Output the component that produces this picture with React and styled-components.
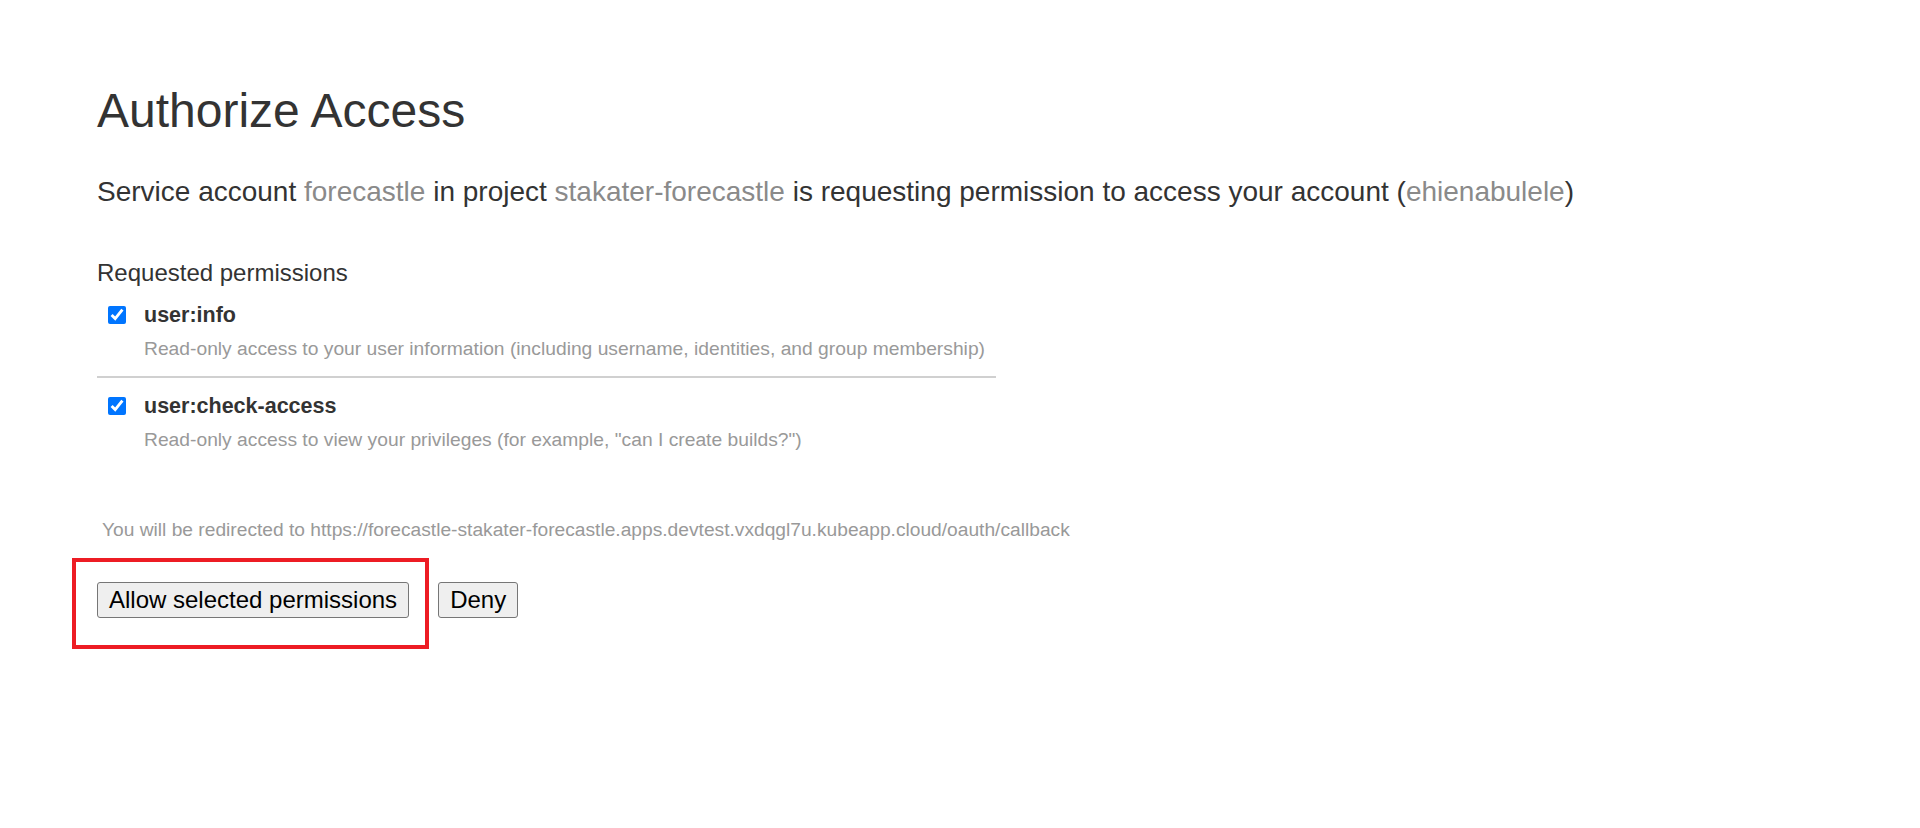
import React from 'react';
import styled, { createGlobalStyle } from 'styled-components';

const GlobalStyle = createGlobalStyle`
  html, body {
    margin: 0;
    padding: 0;
    background: #fff;
  }
  body {
    font-family: "Liberation Sans", Arial, Helvetica, sans-serif;
    color: #333;
  }
`;

const Page = styled.div`
  padding: 83px 0 0 97px;
  min-height: 828px;
  box-sizing: border-box;
`;

const Title = styled.h1`
  margin: 0;
  font-size: 48px;
  line-height: 56px;
  font-weight: 400;
  color: #333;
`;

const Lead = styled.p`
  margin: 37px 0 0;
  font-size: 28px;
  line-height: 32px;
  color: #333;
`;

const Muted = styled.span`
  color: #8a8a8a;
`;

const SectionLabel = styled.div`
  margin-top: 51px;
  font-size: 24px;
  line-height: 28px;
  color: #333;
`;

const PermissionList = styled.div`
  width: 899px;
  margin-top: 16px;
`;

const Permission = styled.label`
  display: grid;
  grid-template-columns: 18px 1fr;
  column-gap: 18px;
  padding: 0 0 ${(p) => (p.$last ? '0' : '16px')} 11px;
  border-bottom: ${(p) => (p.$last ? 'none' : '2px solid #d0d0d0')};
  margin-bottom: ${(p) => (p.$last ? '0' : '16px')};
`;

const Check = styled.input`
  width: 18px;
  height: 18px;
  margin: 3px 0 0;
  accent-color: #0075ff;
`;

const PermName = styled.div`
  font-size: 21.5px;
  line-height: 24px;
  font-weight: 700;
  color: #333;
`;

const PermDesc = styled.div`
  grid-column: 2;
  margin-top: 11px;
  font-size: 19.25px;
  line-height: 22px;
  color: #999;
`;

const Redirect = styled.div`
  margin: 68px 0 0 5px;
  font-size: 19.2px;
  line-height: 22px;
  color: #999;
`;

const Actions = styled.div`
  display: flex;
  align-items: center;
  gap: 29px;
  margin-top: 41px;
`;

const Highlight = styled.span`
  position: relative;
  display: inline-flex;

  &::after {
    content: '';
    position: absolute;
    top: -24px;
    left: -25px;
    right: -20px;
    bottom: -31px;
    border: 4.5px solid #ed1c24;
    pointer-events: none;
  }
`;

const Button = styled.button`
  font-family: "Liberation Sans", Arial, sans-serif;
  font-size: 24px;
  line-height: 28px;
  color: #000;
  background: #efefef;
  border: 1px solid #767676;
  border-radius: 3px;
  padding: 3px 11px;
  cursor: pointer;
`;

const permissions = [
  {
    name: 'user:info',
    desc: 'Read-only access to your user information (including username, identities, and group membership)',
  },
  {
    name: 'user:check-access',
    desc: 'Read-only access to view your privileges (for example, "can I create builds?")',
  },
];

export default function App() {
  return (
    <>
      <GlobalStyle />
      <Page>
        <Title>Authorize Access</Title>
        <Lead>
          Service account <Muted>forecastle</Muted> in project{' '}
          <Muted>stakater-forecastle</Muted> is requesting permission to access
          your account (<Muted>ehienabulele</Muted>)
        </Lead>
        <SectionLabel>Requested permissions</SectionLabel>
        <PermissionList>
          {permissions.map((p, i) => (
            <Permission key={p.name} $last={i === permissions.length - 1}>
              <Check type="checkbox" defaultChecked />
              <PermName>{p.name}</PermName>
              <PermDesc>{p.desc}</PermDesc>
            </Permission>
          ))}
        </PermissionList>
        <Redirect>
          You will be redirected to
          https://forecastle-stakater-forecastle.apps.devtest.vxdqgl7u.kubeapp.cloud/oauth/callback
        </Redirect>
        <Actions>
          <Highlight>
            <Button>Allow selected permissions</Button>
          </Highlight>
          <Button>Deny</Button>
        </Actions>
      </Page>
    </>
  );
}
